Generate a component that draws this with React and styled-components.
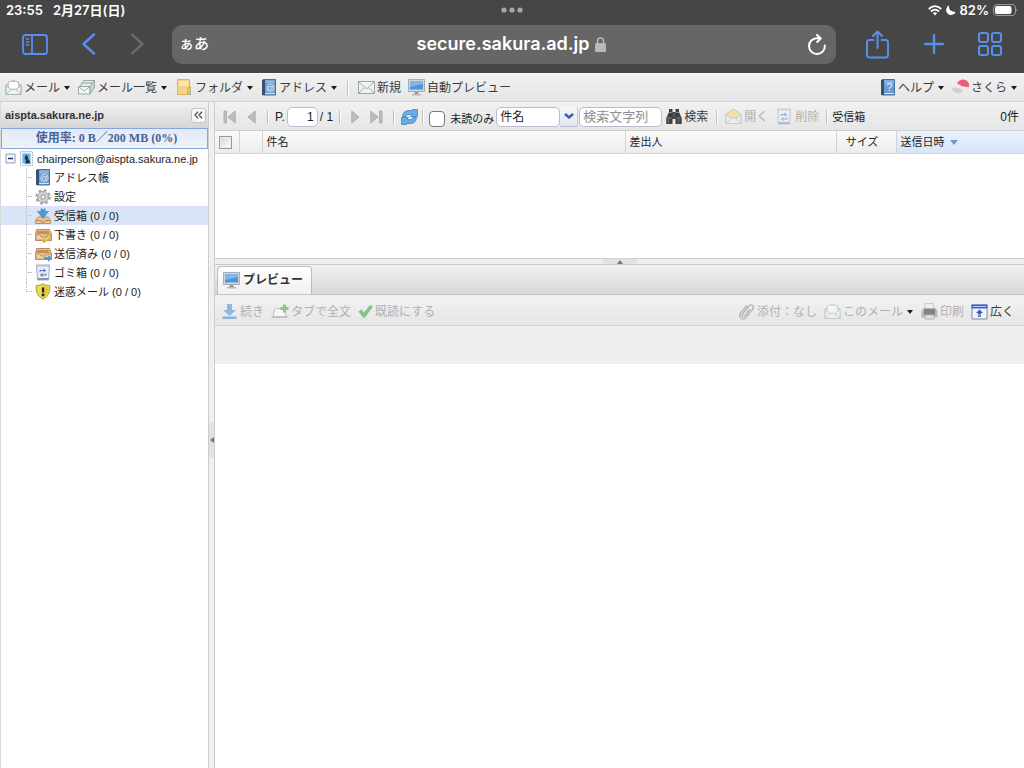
import React, {useState} from 'react';
import styled, {css, createGlobalStyle} from 'styled-components';

const GlobalStyle = createGlobalStyle`
  * {
    box-sizing: border-box;
  }

  body {
    margin: 0;
    background: #fff;
    color: #222;
    font-family: "Liberation Sans", "Noto Sans CJK JP", sans-serif;
    font-size: 12px;
    line-height: 16px;
  }

  button, input, select {
    font: inherit;
    color: inherit;
  }

  svg {
    display: block;
    flex: none;
  }
`;

const Page = styled.div`
  min-height: 100vh;
  display: flex;
  flex-direction: column;
`;

/* ---------- browser chrome ---------- */

const Chrome = styled.header`
  background: #464646;
  color: #fff;
  font-family: Inter, "Noto Sans CJK JP", sans-serif;
  font-weight: 600;
`;

const StatusBar = styled.div`
  display: grid;
  grid-template-columns: 1fr auto 1fr;
  align-items: center;
  height: 20px;
  padding: 0 6px;
  font-size: 13px;
`;

const StatusGroup = styled.div`
  display: flex;
  align-items: center;
  gap: ${props => props.$gap || 4}px;
  justify-content: ${props => (props.$end ? 'flex-end' : 'flex-start')};
`;

const NavBar = styled.div`
  display: flex;
  align-items: center;
  height: 53px;
  padding: 0 22px 5px;
`;

const NavGroup = styled.div`
  display: flex;
  flex: none;
  align-items: center;
  justify-content: space-between;
  width: ${props => props.$width}px;
`;

const NavButton = styled.button`
  display: flex;
  padding: 0;
  border: none;
  background: none;
  color: ${props => (props.$dim ? '#6b6b6b' : '#578ff0')};
  cursor: pointer;
`;

const AddressBar = styled.div`
  display: flex;
  align-items: center;
  flex: 1;
  height: 39px;
  margin: 0 30px 0 28px;
  padding: 0 10px 0 7px;
  border-radius: 10px;
  background: #666;
`;

const ReaderButton = styled.button`
  width: 32px;
  padding: 0;
  border: none;
  background: none;
  color: #fff;
  font-size: 15px;
  font-weight: 500;
  text-align: left;
`;

const Host = styled.div`
  display: flex;
  flex: 1;
  align-items: center;
  justify-content: center;
  gap: 6px;
  padding-left: 4px;
  font-size: 18px;
  line-height: 24px;
`;

/* ---------- shared toolbar parts ---------- */

const bar = css`
  display: flex;
  align-items: center;
  background: linear-gradient(#f1f1f1, #e6e6e6);
`;

const AppBar = styled.nav`
  ${bar}
  height: 29px;
  gap: 7px;
  padding: 0 6px 0 5px;
  border-top: 1px solid #fafafa;
  border-bottom: 1px solid #cfcfcf;
`;

const BarButton = styled.button`
  display: flex;
  align-items: center;
  gap: 2px;
  padding: 0;
  border: none;
  background: none;
  color: #3c3c3c;
  white-space: nowrap;
  cursor: pointer;

  &:disabled {
    color: #b0b0b0;
    cursor: default;
  }

  &:disabled svg {
    opacity: 0.55;
  }
`;

const Caret = styled.span`
  width: 6px;
  margin: 1px 1px 0 2px;
  border: solid transparent;
  border-width: 4px 3px 0;
  border-top-color: #1c1c1c;
`;

const Divider = styled.span`
  flex: none;
  width: 2px;
  height: 14px;
  margin: 0 ${props => props.$space || 0}px;
  border-left: 1px solid #c3beb0;
  border-right: 1px solid #fff;
`;

const Spacer = styled.span`
  flex: 1;
`;

/* ---------- body layout ---------- */

const Body = styled.div`
  display: flex;
  flex: 1;
`;

const Sidebar = styled.aside`
  flex: none;
  width: 209px;
  border-right: 1px solid #cdcdcd;
  border-left: 1px solid #d9d9d9;
  background: #fff;
`;

const SidebarTitle = styled.div`
  display: flex;
  align-items: center;
  justify-content: space-between;
  height: 26px;
  padding: 0 2px 0 4px;
  background: linear-gradient(#f2f2f2, #d5d5d5);
  color: #333;
  font-weight: 700;
  font-size: 11px;
`;

const CollapseButton = styled.button`
  display: flex;
  align-items: center;
  justify-content: center;
  width: 15px;
  height: 15px;
  padding: 0;
  border: 1px solid #c4c4c4;
  border-radius: 3px;
  background: #f7f7f7;
`;

const Quota = styled.div`
  height: 21px;
  padding-left: 4px;
  border: 1px solid #86a7dc;
  background: linear-gradient(#e3eaf6, #eef2f9);
  color: #44629b;
  font-family: "Liberation Serif", "Noto Sans CJK JP", serif;
  font-weight: 700;
  line-height: 19px;
  text-align: center;
`;

const Tree = styled.ul`
  margin: 0;
  padding: 0;
  list-style: none;
  font-size: 11px;
`;

const TreeRow = styled.li`
  display: flex;
  align-items: center;
  height: 19px;
  padding-left: ${props => (props.$root ? 4 : 25)}px;
  gap: ${props => (props.$root ? 4 : 2)}px;
  background: ${props => (props.$active ? '#d9e5f7' : 'none')};
  white-space: nowrap;
`;

const Branch = styled.span`
  align-self: flex-start;
  width: 6px;
  height: ${props => (props.$last ? 10 : 19)}px;
  border-left: 1px dotted #bbb;
  ${props => props.$last && 'border-bottom: 1px dotted #bbb;'}
  ${props =>
    !props.$last &&
    'background: linear-gradient(#ccc, #ccc) 0 9px / 6px 1px no-repeat;'}
`;

const VSplit = styled.div`
  flex: none;
  display: flex;
  align-items: center;
  width: 6px;
  padding-top: 10px;
  background: #efefef;
  border-right: 1px solid #cdcdcd;
`;

const Grip = styled.button`
  display: flex;
  align-items: center;
  justify-content: center;
  width: ${props => (props.$flat ? 34 : 5)}px;
  height: ${props => (props.$flat ? 5 : 36)}px;
  padding: 0;
  border: none;
  border-radius: 2px;
  background: #e2e2e2;
`;

const Main = styled.main`
  display: flex;
  flex: 1;
  flex-direction: column;
  min-width: 0;
`;

/* ---------- message list ---------- */

const ListBar = styled.div`
  ${bar}
  height: 29px;
  padding: 0 5px 0 8px;
  border-top: 1px solid #fafafa;
  border-bottom: 1px solid #cfcfcf;
  white-space: nowrap;
`;

const Pager = styled.div`
  display: flex;
  flex: none;
  align-items: center;
  gap: ${props => props.$gap}px;
  margin-right: 6px;
`;

const PageLabel = styled.label`
  display: flex;
  align-items: center;
  gap: 2px;
  margin-right: 6px;
`;

const field = css`
  height: 20px;
  padding: 0 3px;
  border: 1px solid #b9bdd0;
  border-radius: 5px;
  background: #fff;
  outline: none;
`;

const PageInput = styled.input`
  ${field}
  width: 31px;
  text-align: right;
`;

const UnreadLabel = styled.label`
  display: flex;
  align-items: center;
  gap: 5px;
  margin: 4px 2px 0 5px;
  font-size: 11px;
`;

const UnreadBox = styled.input`
  appearance: none;
  width: 16px;
  height: 16px;
  margin: 0;
  border: 1px solid #777;
  border-radius: 4px;
  background: #fff;
`;

const FieldSelect = styled.select`
  ${field}
  appearance: none;
  width: 64px;
`;

const SelectTrigger = styled.button`
  display: flex;
  align-items: center;
  justify-content: center;
  width: 18px;
  height: 20px;
  margin-right: 1px;
  padding: 0;
  border: none;
  border-bottom: 1px solid #b9bdd0;
  border-right: 1px solid #c9ccd8;
  background: linear-gradient(#f3f5f9, #e3e8f1);
  color: #3c5f9f;
`;

const SearchInput = styled.input`
  ${field}
  width: 83px;
  margin-right: 4px;
  font-size: 13px;

  &::placeholder {
    color: #8f8f8f;
  }
`;

const ActionGroup = styled.div`
  display: flex;
  align-items: center;
  gap: ${props => props.$gap}px;
  margin-left: ${props => props.$before || 0}px;
`;

const BoxName = styled.span`
  margin-left: 4px;
  font-size: 11px;
`;

const List = styled.section`
  min-height: 128px;
  border-bottom: 1px solid #cfcfcf;
`;

const Grid = styled.table`
  width: 100%;
  table-layout: fixed;
  border-collapse: collapse;
  font-size: 11px;
`;

const HeadCell = styled.th`
  width: ${props => (props.$width ? `${props.$width}px` : 'auto')};
  height: 22px;
  padding: 0 4px;
  border-right: 1px solid #d2d2d2;
  border-bottom: 1px solid #d6d6d6;
  background: ${props =>
    props.$sorted
      ? 'linear-gradient(#ebf1fb, #d7e4f8)'
      : 'linear-gradient(#fafafa, #ebecee)'};
  font-weight: 400;
  text-align: left;
  white-space: nowrap;

  ${props => props.$center && 'padding-right: 12px; text-align: center;'}

  &:last-child {
    border-right: none;
    border-left: 1px solid #a8c1e6;
  }
`;

const SelectAll = styled.input`
  appearance: none;
  display: block;
  width: 13px;
  height: 13px;
  margin: 2px 0 0;
  border: 1px solid #999;
  background: linear-gradient(135deg, #d4d4d4, #fff);
  box-shadow: inset 0 0 0 1px #eee;
`;

const SortMark = styled.span`
  display: inline-block;
  margin-left: 5px;
  border: solid transparent;
  border-width: 5px 4px 0;
  border-top-color: #6c98da;
  vertical-align: 1px;
`;

const HSplit = styled.div`
  display: flex;
  justify-content: center;
  height: 5px;
  background: #efefef;
`;

/* ---------- preview ---------- */

const TabStrip = styled.div`
  display: flex;
  align-items: flex-end;
  height: 31px;
  padding-left: 2px;
  border-top: 1px solid #c9c9c9;
  border-bottom: 1px solid #c6c6c6;
  background: linear-gradient(#f0f0f0, #d7d7d7);
`;

const Tab = styled.button`
  display: flex;
  align-items: center;
  gap: 3px;
  height: 28px;
  padding: 0 8px 1px 5px;
  border: 1px solid #bdbdbd;
  border-bottom: none;
  border-radius: 4px 4px 0 0;
  background: linear-gradient(#fff, #f0f0f0);
  color: #333;
  font-weight: 700;
`;

const PreviewBar = styled.div`
  ${bar}
  height: 31px;
  gap: 7px;
  padding: 0 10px 0 5px;
  border-top: 3px solid #efefef;
  border-bottom: 1px solid #d2d2d2;
  white-space: nowrap;
`;

const MessageHead = styled.div`
  height: 38px;
  background: #efefef;
`;

/* ---------- icons ---------- */

const Mail = ({open}) => (
  <svg width="17" height="17" viewBox="0 0 17 17">
    <path d="M1 6l7.500-5 7.500 5v9.500H1z" fill={open ? '#f3d680' : '#d8e3df'} stroke={open ? '#c9ab5c' : '#9fb0ab'} />
    {!open && <path d="M3.500 2.500h10v8h-10z" fill="#fdfdf5" stroke="#c5c8b5" />}
    {!open && <path d="M3.500 2.500h10M12 2.500l2 2" stroke="#dcc57b" />}
    <path d="M1 6.500l5 4 2.500-.5 2.500.5 5-4v9H1z" fill="#eef4f1" stroke="#a6b9b4" />
    <path d="M1.500 15l4.500-4.500M15.500 15L11 10.500" stroke="#a6b9b4" fill="none" />
  </svg>
);

const MailStack = () => (
  <svg width="17" height="17" viewBox="0 0 17 17">
    <g fill="#e4ebea" stroke="#98a9a7" strokeLinejoin="round">
      <path d="M6.500 1.500h10v7l-4 4z" />
      <path d="M5.500 1.500h11l-1.500 7h-11z" />
      <path d="M3.500 4h11L13 11.500H2z" />
      <path d="M.5 7.500h11.500V15H.5z" fill="#f4f8f7" />
      <path d="M12 7.500L16.500 1.500v7L12 15z" fill="#c9d4d2" />
      <path d="M.5 7.500L6.200 12 12 7.500" fill="none" />
    </g>
  </svg>
);

const Letter = () => (
  <svg width="17" height="17" viewBox="0 0 17 17">
    <path d="M.5 2.500h16v12H.5z" fill="#edf3f1" stroke="#98a5a3" />
    <path d="M1 3l7.500 7L16 3M1 14l5.500-5.500M16 14l-5.500-5.500" fill="none" stroke="#9cafab" />
  </svg>
);

const Folder = () => (
  <svg width="15" height="17" viewBox="0 0 15 17">
    <path d="M.5.5h12v15H.5z" fill="#f2d489" stroke="#dcb45c" />
    <path d="M2 2h9v5H2z" fill="#f9e5ae" />
    <path d="M10.500 9.500l3-2v8h-3z" fill="#ecc873" stroke="#d5ad55" />
    <path d="M13 12v4" stroke="#8fbdd0" strokeWidth="2" />
  </svg>
);

const Book = ({mark = '@'}) => (
  <svg width="16" height="17" viewBox="0 0 16 17">
    <path d="M2 .5h12.500v15.500H2z" fill="#6f9bcc" stroke="#4671a5" />
    <path d="M1 1h3v15H1z" fill="#3c5170" />
    <path d="M4.500 1.500h9v3h-9z" fill="#8fb4dd" />
    <path d="M4 14.500h10" stroke="#d6e2ee" />
    <text x="9.300" y="12" textAnchor="middle" fontSize={mark === '?' ? 11 : 9} fill="#e8f1fb">
      {mark}
    </text>
  </svg>
);

const Monitor = () => (
  <svg width="17" height="17" viewBox="0 0 17 17">
    <path d="M.5.5h16v12H.5z" fill="#d3d6d8" stroke="#a9adb0" />
    <path d="M2 2h13v8.500H2z" fill="#4f94da" />
    <path d="M2 2h13v3L2 8z" fill="#80b6ea" />
    <path d="M6.500 13h4v2h-4z" fill="#9b9b9b" />
    <path d="M4 15h9v1.500H4z" fill="#b9b9b9" />
  </svg>
);

const Sakura = () => (
  <svg width="17" height="17" viewBox="0 0 17 17">
    <path d="M5 5A6.200 6.200 0 0 1 17 8.500q-1.500-1.500-3.200-.3Q12 6.500 10 7.500 8 4.500 5 5z" fill="#ee5f75" />
    <path d="M0 8.500q2 1.500 4-.5 1 2.500 3.500 1 1.500 2.500 4 1.500A6 6 0 0 1 0 8.500z" fill="#cfcfcf" />
  </svg>
);

const Gear = () => (
  <svg width="16" height="16" viewBox="0 0 16 16">
    <circle cx="8" cy="8" r="6.500" fill="none" stroke="#a5a5a5" strokeWidth="2.500" strokeDasharray="2.600 2.500" />
    <circle cx="8" cy="8" r="5.500" fill="#dadada" stroke="#a3a3a3" />
    <path d="M8 3v10M3 8h10M4.500 4.500l7 7M11.500 4.500l-7 7" stroke="#b4b4b4" />
    <circle cx="8" cy="8" r="2" fill="#fff" stroke="#9a9a9a" />
  </svg>
);

const Inbox = () => (
  <svg width="16" height="16" viewBox="0 0 16 16">
    <path d="M3 9h10l2.500 3.500v3H.5v-3z" fill="#eac397" stroke="#c4935c" />
    <path d="M1 12.500h4.500l1 1.500h3l1-1.500H15" fill="none" stroke="#b98348" />
    <path d="M6 .5v3H2.500L8 10.500l5.500-7H10v-3L8 2z" fill="#5198d6" stroke="#3e81be" strokeWidth=".6" />
  </svg>
);

const Tray = ({sent}) => (
  <svg width="17" height="16" viewBox="0 0 17 16">
    <path d="M1.500 2.500h13l2 5v6H.5v-6z" fill="#e8bd8c" stroke="#bd8a54" />
    <path d="M2.500 4h11l.8 3H1.700z" fill="#c4915b" />
    <path d="M1 8h4l1 2h5l1-2h4v5H1z" fill="#f1d1ac" stroke="#c8965f" />
    {sent ? (
      <path d="M9 11h4V9l3.700 3.500L13 16v-2H9z" fill="#4e9ad9" />
    ) : (
      <path d="M8 15.500l1-3 5-5 2 2-5 5z" fill="#f0d347" stroke="#a8874b" strokeWidth=".7" />
    )}
  </svg>
);

const Trash = () => (
  <svg width="14" height="17" viewBox="0 0 14 17">
    <path d="M.5 1h13L12.500 16h-11z" fill="#e8eef6" stroke="#9fadc0" />
    <path d="M.5 1h13v1.500H.5z" fill="#b8c2cf" />
    <path d="M4 8V6.500h5M7.500 5l2 1.500-2 1.500M10 9.500V11H5M6.500 9.500l-2 1.500 2 1.500" fill="none" stroke="#4b70cf" />
    <path d="M1.500 15h11" stroke="#8c97a6" strokeWidth="2" />
  </svg>
);

const Shield = () => (
  <svg width="16" height="17" viewBox="0 0 16 17">
    <path d="M8 .8q3 2 6.800 1.700Q16 12 8 16.200 0 12 1.200 2.500 5 2.800 8 .8z" fill="#ebdc4c" stroke="#a9a142" />
    <path d="M8 2.500v12Q13.700 11 13.300 4 10.500 4 8 2.500z" fill="#d8c937" />
    <path d="M8 4.500v5" stroke="#222" strokeWidth="2.200" />
    <circle cx="8" cy="12" r="1.400" fill="#222" />
  </svg>
);

const Stamp = () => (
  <svg width="13" height="15" viewBox="0 0 13 15">
    <path d="M.5.500h12v14H.5z" fill="#eff6fa" stroke="#9cb8c8" strokeDasharray="1.500 1" />
    <path d="M2.500 2.500h8v10h-8z" fill="#6fb3e4" />
    <path d="M6 3.500l2 2v2l2 3v2H5l1-3-1.500-2z" fill="#24384a" />
  </svg>
);

const Minus = () => (
  <svg width="11" height="11" viewBox="0 0 11 11">
    <path d="M1 1h9v9H1z" fill="#f3f5fa" stroke="#8f9db8" />
    <path d="M3 5.500h5" stroke="#24396c" strokeWidth="1.500" />
  </svg>
);

const PageArrow = ({flip, end}) => (
  <svg width={end ? 13 : 9} height="14" viewBox={end ? '0 0 13 14' : '0 0 9 14'}>
    <g
      fill="#bcbcbc"
      stroke="#b0b0b0"
      transform={flip ? `translate(${end ? 13 : 9} 0) scale(-1 1)` : undefined}
    >
      <path d="M.8 1v12L8 7z" />
      {end && <path d="M9.500 1h2.500v12H9.500z" />}
    </g>
  </svg>
);

const Refresh = () => (
  <svg width="17" height="16" viewBox="0 0 17 16">
    <g fill="#69aee8" stroke="#3a80c4" strokeWidth=".8" strokeLinejoin="round">
      <path d="M1.500 7.500Q2 1.500 8 1.500h3.500V.600L16.400.6V7.500H9.500L11.300 5.300H8Q5.500 5.300 5 7.500z" />
      <path d="M15.500 8.500Q15 14.500 9 14.500H5.500v.900H.6V8.500h6.900L5.700 10.700H9q2.500 0 3-2.200z" />
    </g>
  </svg>
);

const Binoculars = () => (
  <svg width="16" height="17" viewBox="0 0 16 17">
    <path d="M3 1h3.500v3h3V1H13v3l2.700 6v6H9.500v-5h-3v5H.3v-6L3 4z" fill="#3f3f3f" />
    <path d="M3 4.500h3.500M9.500 4.500H13M1.500 10h4M10.500 10h4" stroke="#8b8b8b" />
    <path d="M2.500 11v4M12.500 11v4M8 5v4" stroke="#777" />
  </svg>
);

const Download = () => (
  <svg width="15" height="17" viewBox="0 0 15 17">
    <path d="M5 1h5v6h4l-6.500 6L1 7h4z" fill="#3f8fd4" />
    <path d="M.5 13.500h14V16H.5z" fill="#4485c4" />
  </svg>
);

const NewTab = () => (
  <svg width="18" height="16" viewBox="0 0 18 16">
    <path d="M2 12.500L3.500 6q.3-1.500 2-1.500h6q1.500 0 2 1.500L15 12.500" fill="#fff" stroke="#999" />
    <path d="M.5 13h16" stroke="#888" strokeWidth="1.500" />
    <path d="M12 .500h3v2.500h2.500v3H15v2.500h-3V6H9.500V3H12z" fill="#36ac3e" />
  </svg>
);

const Check = () => (
  <svg width="15" height="15" viewBox="0 0 15 15">
    <path d="M.3 7.500L3.500 5.500l2.500 3L12 1l3 1.500-8 11H5z" fill="#2fa43b" />
    <path d="M4 14.500h6" stroke="#ddd" />
  </svg>
);

const Clip = () => (
  <svg width="17" height="17" viewBox="0 0 17 17">
    <path
      d="M12 6L7 12.500Q5.500 14 4.500 13 3.500 12 4.800 10.500L10.500 3.500Q12.500 1 14.500 2.500 16.300 4 14.500 6.500L8 14.500Q5.500 17 3 15 .5 12.800 2.500 10L9 2.500"
      fill="none"
      stroke="#858585"
      strokeWidth="1.300"
    />
  </svg>
);

const Printer = () => (
  <svg width="17" height="17" viewBox="0 0 17 17">
    <path d="M4 .5h8.500V6H4z" fill="#e6f2f2" stroke="#9bb" />
    <path d="M2.500 5h12l2 3v6.500H.5V8z" fill="#8f8f8f" />
    <path d="M3 6h11v6H3z" fill="#2f2f2f" />
    <path d="M4 12h9v4H4z" fill="#d5dede" stroke="#8a8a8a" />
  </svg>
);

const Expand = () => (
  <svg width="17" height="16" viewBox="0 0 17 16">
    <path d="M1 1h15v14H1z" fill="#f2f3f7" stroke="#848a98" />
    <path d="M.5.5h16v4H.5z" fill="#3f63d0" />
    <path d="M2 2.500h13" stroke="#b9c8f4" />
    <path d="M8.500 5.500L5 9h2v1.500h3V9h2z" fill="#3457cb" />
    <path d="M7 12h3" stroke="#3457cb" strokeWidth="1.500" />
  </svg>
);

const Wifi = () => (
  <svg width="14" height="11" viewBox="0 0 14 11" fill="none" stroke="#fff" strokeWidth="1.800">
    <path d="M.7 4Q7-1.700 13.300 4M2.900 6.500q4.100-3.700 8.200 0" />
    <path d="M4.800 8Q7 6.300 9.200 8L7 10.500z" fill="#fff" stroke="none" />
  </svg>
);

const Moon = () => (
  <svg width="10" height="10" viewBox="0 0 10 10">
    <path d="M3.200.3Q1.800 6.800 9.700 6.900A5 5 0 1 1 3.200.3z" fill="#fff" />
  </svg>
);

const Battery = () => (
  <svg width="25" height="12" viewBox="0 0 25 12">
    <rect x=".5" y=".5" width="22" height="11" rx="3.500" fill="none" stroke="#9a9a9a" />
    <rect x="2" y="2" width="16.500" height="8" rx="2" fill="#fff" />
    <path d="M23.500 4.200q1.600 1.800 0 3.600z" fill="#9a9a9a" />
  </svg>
);

const Dots = () => (
  <svg width="22" height="6" viewBox="0 0 22 6" fill="#a8a8a8">
    <circle cx="3" cy="3" r="2.600" />
    <circle cx="11" cy="3" r="2.600" />
    <circle cx="19" cy="3" r="2.600" />
  </svg>
);

const SidebarIcon = () => (
  <svg width="26" height="21" viewBox="0 0 26 21" fill="none" stroke="currentColor" strokeWidth="1.800">
    <rect x="1" y="1" width="24" height="19" rx="2.500" />
    <path d="M10 1v19" />
    <path d="M3.800 5h3.500M3.800 8h3.500M3.800 11h3.500" strokeWidth="1.300" />
  </svg>
);

const Chevron = ({right}) => (
  <svg width="14" height="22" viewBox="0 0 14 22" fill="none" stroke="currentColor" strokeWidth="2.400" strokeLinecap="round" strokeLinejoin="round">
    <path d={right ? 'M2 1.500L12.500 11 2 20.500' : 'M12 1.500L1.500 11l10.500 9.500'} />
  </svg>
);

const Lock = () => (
  <svg width="11" height="15" viewBox="0 0 11 15">
    <rect y="6" width="11" height="9" rx="1.500" fill="#b9b9bb" />
    <path d="M2.500 7V4q0-3 3-3t3 3v3" fill="none" stroke="#b9b9bb" strokeWidth="1.500" />
  </svg>
);

const Reload = () => (
  <svg width="18" height="21" viewBox="0 0 18 21" fill="none" stroke="#fff" strokeWidth="2" strokeLinecap="round" strokeLinejoin="round">
    <path d="M16.800 11.500A7.900 7.900 0 1 1 9 4.200h3.500M9 .9l3.800 3.500L9.200 8" />
  </svg>
);

const Share = () => (
  <svg width="23" height="29" viewBox="0 0 23 29" fill="none" stroke="currentColor" strokeWidth="2" strokeLinecap="round" strokeLinejoin="round">
    <path d="M7.500 10H3.500Q1 10 1 12.500v12Q1 27.500 3.500 27.500h16q2.500 0 2.500-3v-12Q22 10 19.500 10h-4M11.500 18V1.500M7 6l4.500-4.500L16 6" />
  </svg>
);

const Plus = () => (
  <svg width="20" height="20" viewBox="0 0 20 20" stroke="currentColor" strokeWidth="2.400" strokeLinecap="round">
    <path d="M10 1v18M1 10h18" />
  </svg>
);

const Tabs = () => (
  <svg width="24" height="24" viewBox="0 0 24 24" fill="none" stroke="currentColor" strokeWidth="2">
    <rect x="1" y="1" width="9" height="9" rx="2" />
    <rect x="14" y="1" width="9" height="9" rx="2" />
    <rect x="1" y="14" width="9" height="9" rx="2" />
    <rect x="14" y="14" width="9" height="9" rx="2" />
  </svg>
);

const folders = [
  {name: 'アドレス帳', icon: <Book />},
  {name: '設定', icon: <Gear />},
  {name: '受信箱', icon: <Inbox />, count: '(0 / 0)'},
  {name: '下書き', icon: <Tray />, count: '(0 / 0)'},
  {name: '送信済み', icon: <Tray sent />, count: '(0 / 0)'},
  {name: 'ゴミ箱', icon: <Trash />, count: '(0 / 0)'},
  {name: '迷惑メール', icon: <Shield />, count: '(0 / 0)'},
];

const IconSlot = styled.span`
  display: flex;
  flex: none;
  align-items: center;
  justify-content: center;
  width: 18px;
`;

const MenuButton = ({icon, children, disabled}) => (
  <BarButton disabled={disabled}>
    {icon}
    {children}
    <Caret />
  </BarButton>
);

const BrowserChrome = () => (
  <Chrome>
    <StatusBar>
      <StatusGroup $gap={10}>
        <span>23:55</span>
        <span>2月27日(日)</span>
      </StatusGroup>
      <Dots />
      <StatusGroup $end>
        <Wifi />
        <Moon />
        <span>82%</span>
        <Battery />
      </StatusGroup>
    </StatusBar>
    <NavBar>
      <NavGroup $width={122}>
        <NavButton aria-label="サイドバー"><SidebarIcon /></NavButton>
        <NavButton aria-label="戻る"><Chevron /></NavButton>
        <NavButton aria-label="進む" $dim><Chevron right /></NavButton>
      </NavGroup>
      <AddressBar>
        <ReaderButton>ぁあ</ReaderButton>
        <Host>
          secure.sakura.ad.jp
          <Lock />
        </Host>
        <NavButton aria-label="再読み込み"><Reload /></NavButton>
      </AddressBar>
      <NavGroup $width={136}>
        <NavButton aria-label="共有"><Share /></NavButton>
        <NavButton aria-label="新規タブ"><Plus /></NavButton>
        <NavButton aria-label="タブ一覧"><Tabs /></NavButton>
      </NavGroup>
    </NavBar>
  </Chrome>
);

const FolderPanel = () => {
  const [active, setActive] = useState('受信箱');

  return (
    <Sidebar>
      <SidebarTitle>
        aispta.sakura.ne.jp
        <CollapseButton aria-label="閉じる">
          <svg width="9" height="8" viewBox="0 0 9 8" fill="none" stroke="#555" strokeWidth="1.300">
            <path d="M4 .8L1 4l3 3.200M8 .8L5 4l3 3.200" />
          </svg>
        </CollapseButton>
      </SidebarTitle>
      <Quota>使用率: 0 B／200 MB (0%)</Quota>
      <Tree>
        <TreeRow $root>
          <Minus />
          <Stamp />
          chairperson@aispta.sakura.ne.jp
        </TreeRow>
        {folders.map((item, index) => (
          <TreeRow
            key={item.name}
            $active={item.name === active}
            onClick={() => setActive(item.name)}
          >
            <Branch $last={index === folders.length - 1} />
            <IconSlot>{item.icon}</IconSlot>
            {item.name} {item.count}
          </TreeRow>
        ))}
      </Tree>
    </Sidebar>
  );
};

const MessageList = () => (
  <>
    <ListBar>
      <Pager $gap={11}>
        <BarButton aria-label="最初"><PageArrow end flip /></BarButton>
        <BarButton aria-label="前"><PageArrow flip /></BarButton>
        <Divider />
      </Pager>
      <PageLabel>
        P.
        <PageInput defaultValue="1" />
        / 1
      </PageLabel>
      <Pager $gap={10}>
        <Divider />
        <BarButton aria-label="次"><PageArrow /></BarButton>
        <BarButton aria-label="最後"><PageArrow end /></BarButton>
        <Divider />
      </Pager>
      <ActionGroup $gap={4}>
        <BarButton aria-label="更新"><Refresh /></BarButton>
        <Divider />
      </ActionGroup>
      <UnreadLabel>
        <UnreadBox type="checkbox" />
        未読のみ
      </UnreadLabel>
      <FieldSelect aria-label="検索対象" defaultValue="件名">
        <option>件名</option>
        <option>差出人</option>
      </FieldSelect>
      <SelectTrigger aria-label="選択">
        <svg width="10" height="6" viewBox="0 0 10 6" fill="none" stroke="currentColor" strokeWidth="2.400">
          <path d="M1 1l4 3.500L9 1" />
        </svg>
      </SelectTrigger>
      <SearchInput aria-label="検索文字列" placeholder="検索文字列" />
      <BarButton><Binoculars />検索</BarButton>
      <ActionGroup $gap={7} $before={8}>
        <Divider />
        <BarButton disabled><Mail open />開く</BarButton>
        <BarButton disabled><IconSlot><Trash /></IconSlot>削除</BarButton>
        <Divider />
      </ActionGroup>
      <BoxName>受信箱</BoxName>
      <Spacer />
      0件
    </ListBar>
    <List>
      <Grid>
        <thead>
          <tr>
            <HeadCell $width={24}><SelectAll type="checkbox" aria-label="すべて選択" /></HeadCell>
            <HeadCell $width={23} />
            <HeadCell>件名</HeadCell>
            <HeadCell $width={211}>差出人</HeadCell>
            <HeadCell $width={60} $center>サイズ</HeadCell>
            <HeadCell $width={128} $sorted>送信日時<SortMark /></HeadCell>
          </tr>
        </thead>
      </Grid>
    </List>
  </>
);

const Preview = () => (
  <>
    <TabStrip>
      <Tab><Monitor />プレビュー</Tab>
    </TabStrip>
    <PreviewBar>
      <BarButton disabled><IconSlot><Download /></IconSlot>続き</BarButton>
      <BarButton disabled><NewTab />タブで全文</BarButton>
      <BarButton disabled><Check />既読にする</BarButton>
      <Spacer />
      <BarButton disabled><Clip />添付：なし</BarButton>
      <MenuButton disabled icon={<Mail />}>このメール</MenuButton>
      <BarButton disabled><Printer />印刷</BarButton>
      <BarButton><Expand />広く</BarButton>
    </PreviewBar>
    <MessageHead />
  </>
);

const App = () => (
  <Page>
    <GlobalStyle />
    <BrowserChrome />
    <AppBar>
      <MenuButton icon={<Mail />}>メール</MenuButton>
      <MenuButton icon={<MailStack />}>メール一覧</MenuButton>
      <MenuButton icon={<IconSlot><Folder /></IconSlot>}>フォルダ</MenuButton>
      <MenuButton icon={<Book />}>アドレス</MenuButton>
      <Divider $space={2} />
      <BarButton><Letter />新規</BarButton>
      <BarButton><Monitor />自動プレビュー</BarButton>
      <Spacer />
      <MenuButton icon={<Book mark="?" />}>ヘルプ</MenuButton>
      <MenuButton icon={<Sakura />}>さくら</MenuButton>
    </AppBar>
    <Body>
      <FolderPanel />
      <VSplit>
        <Grip aria-label="フォルダ一覧を閉じる">
          <svg width="4" height="6" viewBox="0 0 4 6"><path d="M4 0v6L0 3z" fill="#777" /></svg>
        </Grip>
      </VSplit>
      <Main>
        <MessageList />
        <HSplit>
          <Grip $flat aria-label="一覧を閉じる">
            <svg width="6" height="4" viewBox="0 0 6 4"><path d="M0 4h6L3 0z" fill="#777" /></svg>
          </Grip>
        </HSplit>
        <Preview />
      </Main>
    </Body>
  </Page>
);

export default App;
